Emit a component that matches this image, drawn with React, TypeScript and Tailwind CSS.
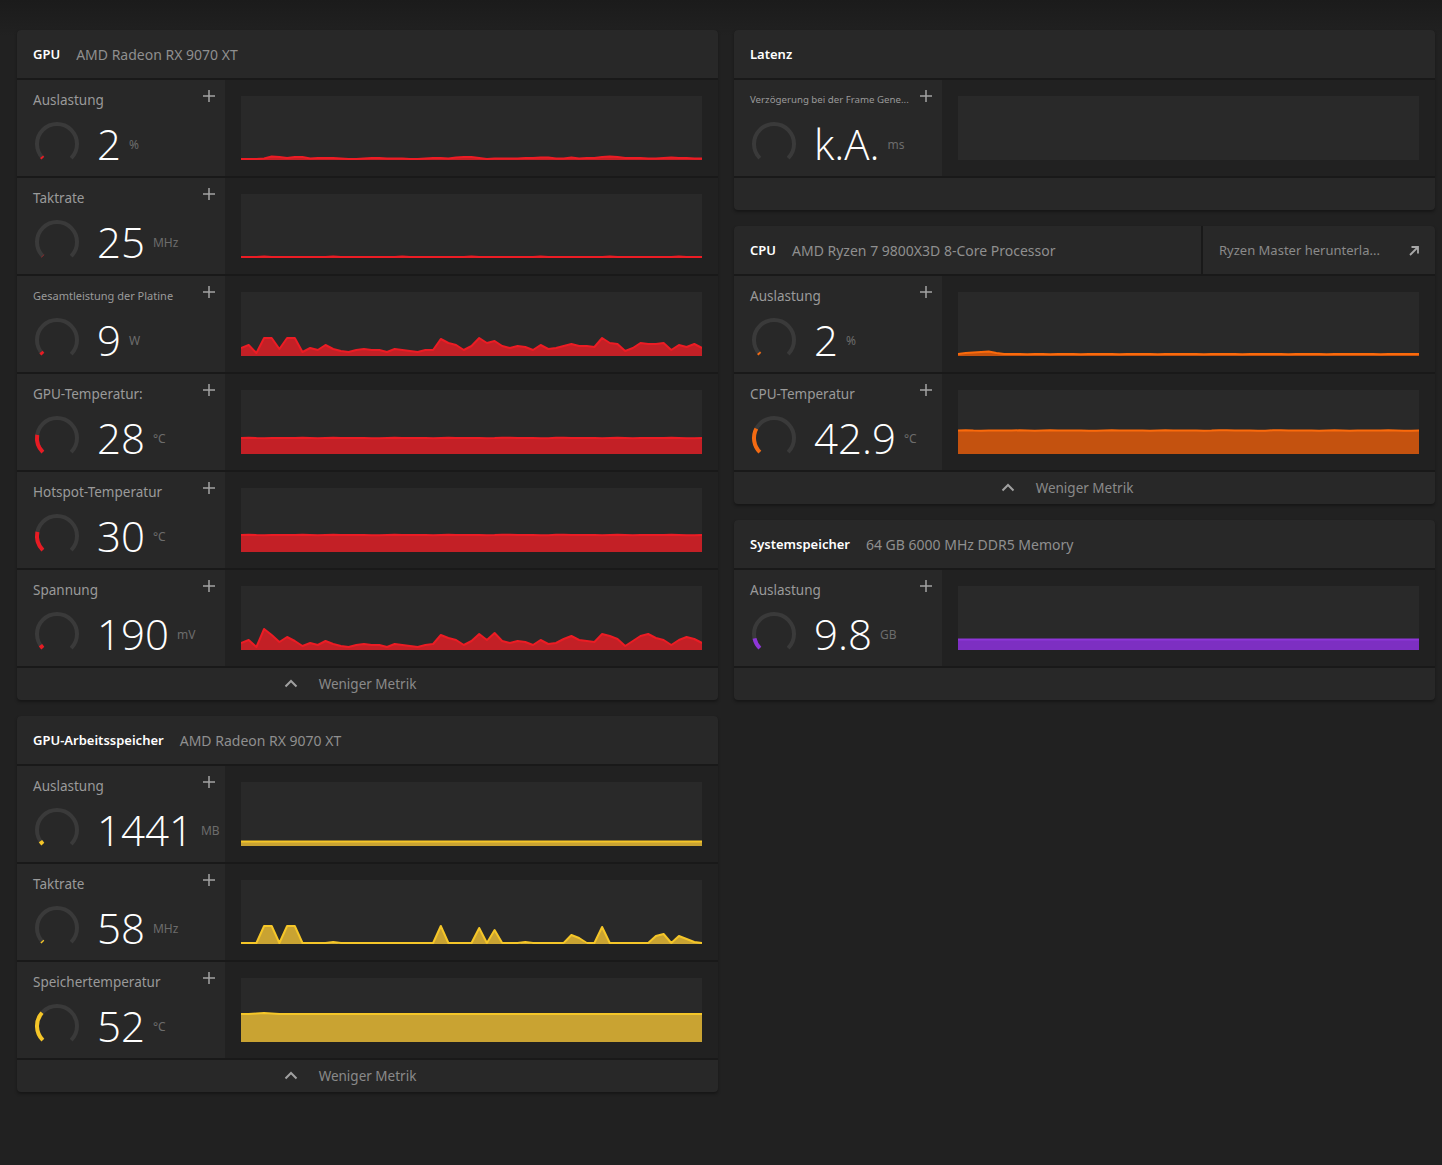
import React from "react";

type Palette = { stroke: string; fill: string; gauge: string };
const RED: Palette = { stroke: "#ec1c24", fill: "#c32026", gauge: "#e81b23" };
const YELLOW: Palette = { stroke: "#f5c628", fill: "#c9a332", gauge: "#f5c628" };
const ORANGE: Palette = { stroke: "#fb6a0b", fill: "#c4520f", gauge: "#f36a12" };
const PURPLE: Palette = { stroke: "#8e36d8", fill: "#7d2fc2", gauge: "#8e36d8" };

const flat = (base: number, n = 61, jitter = 0.3) =>
  Array.from({ length: n }, (_, i) => base + Math.sin(i * 1.7) * jitter * 0.6 + Math.cos(i * 0.9) * jitter * 0.4);

const POWER = [8, 11, 3, 18, 18, 7, 18, 18, 4, 8, 6, 11, 7, 5, 4, 6, 7, 6, 6, 4, 7, 6, 5, 4, 6, 6, 17, 13, 11, 6, 10, 18, 13, 15, 10, 8, 10, 9, 6, 11, 7, 8, 10, 12, 10, 10, 9, 18, 13, 12, 5, 8, 13, 12, 12, 13, 6, 11, 9, 12, 8];
const VOLT = [7, 10, 3, 21, 15, 8, 13, 9, 4, 7, 5, 9, 6, 4, 3, 5, 6, 5, 5, 3, 6, 5, 4, 3, 5, 6, 15, 12, 10, 5, 9, 16, 10, 17, 9, 7, 9, 8, 5, 10, 6, 7, 11, 14, 10, 9, 8, 16, 14, 11, 4, 9, 14, 16, 12, 10, 5, 10, 13, 11, 7];
const GPU_LOAD = [1, 1, 1, 1.5, 3.5, 3, 2, 3, 3, 1.5, 2, 2, 2, 1.5, 1, 1, 1.5, 2, 2, 1.5, 1.5, 1.5, 1, 1, 1.5, 2, 2, 1.5, 2.5, 3, 3, 2, 1, 1.5, 1.5, 1.5, 1.5, 2, 2, 2.5, 2.5, 1.5, 1.5, 2.5, 1.5, 2, 2, 3, 3.5, 3, 2, 2, 2, 1.5, 1.5, 2, 2.5, 2, 2, 1.5, 1.5];
const GPU_CLK = Array.from({ length: 61 }, (_, i) => (i % 9 === 3 ? 1.4 : 0.9));
const MEM_CLK = [0.5, 1, 0, 18, 18, 0, 18, 18, 0, 0, 0, 1, 2, 0, 0, 0.3, 0.5, 0.5, 0.5, 0, 0.5, 0.5, 0.3, 0, 0, 0.3, 18, 1, 0.5, 0.5, 0.5, 16, 0, 14, 0, 0, 0, 2, 0, 1, 0, 0, 0, 9, 6, 0, 0, 17, 1, 1, 0, 0, 1, 1, 8, 10, 0, 8, 5, 2, 1];
const CPU_LOAD = [2, 3, 3.5, 4, 4.5, 3, 2, 2, 2, 1.8, 2, 2, 1.8, 2, 2, 2, 1.8, 2, 2, 2, 2, 1.8, 2, 2, 2, 2, 1.8, 2, 2, 2, 2, 2, 1.8, 2, 2, 2, 2, 1.8, 2, 2, 2, 2, 2, 1.8, 2, 2, 2, 2, 1.8, 2, 2, 2, 2, 2, 2, 1.8, 2, 2, 2, 2, 2];
const MEM_TEMP = [28, 28, 28.5, 29, 28.5, 28, 28, 28, 28, 28, 28, 28, 28, 28, 28, 28, 28, 28, 28, 28, 28, 28, 28, 28, 28, 28, 28, 28, 28, 28, 28, 28, 28, 28, 28, 28, 28, 28, 28, 28, 28, 28, 28, 28, 28, 28, 28, 28, 28, 28, 28, 28, 28, 28, 28, 28, 28, 28, 28, 28, 28];

function Gauge({ frac, color }: { frac: number; color: string }) {
  const cx = 24, cy = 24, r = 20;
  const pt = (deg: number) => {
    const a = (deg * Math.PI) / 180;
    return [cx + r * Math.cos(a), cy + r * Math.sin(a)];
  };
  const [sx, sy] = pt(135);
  const [ex, ey] = pt(45);
  const bg = `M${sx} ${sy} A${r} ${r} 0 1 1 ${ex} ${ey}`;
  let fg: string | null = null;
  if (frac > 0) {
    const sweep = 270 * frac;
    const [fx, fy] = pt(135 + sweep);
    fg = `M${sx} ${sy} A${r} ${r} 0 ${sweep > 180 ? 1 : 0} 1 ${fx} ${fy}`;
  }
  return (
    <svg width="48" height="48" viewBox="0 0 48 48" className="shrink-0">
      <path d={bg} stroke="#3a3a3a" strokeWidth="4" fill="none" />
      {fg && <path d={fg} stroke={color} strokeWidth="4" fill="none" />}
    </svg>
  );
}

function Chart({ data, color }: { data?: number[]; color?: Palette }) {
  const W = 461, H = 64;
  if (!data || !color) return <div className="h-16 bg-[#292929]" />;
  const n = data.length;
  const pts = data.map((v, i) => [(i * W) / (n - 1), H - v]);
  const line = pts.map((p, i) => (i ? "L" : "M") + p[0].toFixed(1) + " " + Math.min(p[1], H - 1).toFixed(1)).join(" ");
  const area = `M0 ${H} ` + pts.map((p) => "L" + p[0].toFixed(1) + " " + p[1].toFixed(1)).join(" ") + ` L${W} ${H} Z`;
  return (
    <div className="h-16 bg-[#292929]">
      <svg className="block h-full w-full" viewBox={`0 0 ${W} ${H}`} preserveAspectRatio="none">
        <path d={area} fill={color.fill} />
        <path d={line} stroke={color.stroke} strokeWidth="2" fill="none" strokeLinejoin="round" />
      </svg>
    </div>
  );
}

function Plus() {
  return (
    <svg width="12" height="12" viewBox="0 0 12 12" className="shrink-0">
      <path d="M6 0V12M0 6H12" stroke="#a3a3a3" strokeWidth="1.5" />
    </svg>
  );
}

type RowProps = {
  label: string;
  labelClass?: string;
  value: string;
  unit: string;
  frac: number;
  color: Palette;
  data?: number[];
};

function Row({ label, labelClass = "text-[13.5px]", value, unit, frac, color, data }: RowProps) {
  return (
    <div className="flex h-[96px]">
      <div className="flex w-[208px] shrink-0 flex-col bg-[#282828] pl-4 pr-[10px] pt-[10px]">
        <div className="flex h-[20px] items-center justify-between">
          <span className={`min-w-0 whitespace-nowrap text-[#9a9a9a] ${labelClass}`}>{label}</span>
          <div className="-mt-[8px] ml-2 shrink-0">
            <Plus />
          </div>
        </div>
        <div className="mt-[10px] flex items-center">
          <Gauge frac={frac} color={color.gauge} />
          <span className="ml-[16px] font-['Open_Sans',sans-serif] text-[42px] font-light leading-none text-white">{value}</span>
          <span className="ml-[8px] mt-[1px] text-[12px] text-[#6c6c6c]">{unit}</span>
        </div>
      </div>
      <div className="flex-1 bg-[#212121] p-4">
        <Chart data={data} color={data ? color : undefined} />
      </div>
    </div>
  );
}

function ChevronUp() {
  return (
    <svg width="14" height="14" viewBox="0 0 14 14" className="shrink-0">
      <path d="M1.5 9.5L7 4L12.5 9.5" stroke="#a0a0a0" strokeWidth="2" fill="none" />
    </svg>
  );
}

function Footer({ less }: { less: boolean }) {
  return (
    <div className="flex h-8 items-center justify-center gap-[21px] bg-[#282828] text-[13.5px] text-[#8a8a8a]">
      {less && (
        <>
          <ChevronUp />
          <span>Weniger Metrik</span>
          <span className="w-[14px]" />
        </>
      )}
    </div>
  );
}

function Card({
  title,
  subtitle,
  extra,
  children,
  less = true,
}: {
  title: string;
  subtitle?: string;
  extra?: React.ReactNode;
  children: React.ReactNode;
  less?: boolean;
}) {
  return (
    <div className="flex flex-col gap-[2px] overflow-hidden rounded-[4px] bg-[#191919] shadow-[0_2px_3px_rgba(0,0,0,0.35)]">
      <div className="flex h-12 gap-[2px]">
        <div className="flex flex-1 items-center gap-4 bg-[#282828] px-4 pt-[1px]">
          <span className="text-[13px] font-semibold text-white">{title}</span>
          {subtitle && <span className="text-[14px] text-[#8f8f8f]">{subtitle}</span>}
        </div>
        {extra}
      </div>
      {children}
      <Footer less={less} />
    </div>
  );
}

function ArrowUpRight() {
  return (
    <svg width="12" height="12" viewBox="0 0 12 12" className="shrink-0">
      <path d="M2 10L10 2M3.5 2H10V8.5" stroke="#a8a8a8" strokeWidth="1.8" fill="none" />
    </svg>
  );
}

export default function App() {
  return (
    <div className="min-h-[1165px] w-full bg-[linear-gradient(to_bottom,#1b1b1b_0px,#212121_36px)] pl-[17px] pt-[30px] font-['Noto_Sans',sans-serif]">
      <div className="flex w-[1418px] items-start gap-4">
        <div className="flex w-[701px] flex-col gap-4">
          <Card title="GPU" subtitle="AMD Radeon RX 9070 XT">
            <Row label="Auslastung" value="2" unit="%" frac={0.02} color={RED} data={GPU_LOAD} />
            <Row label="Taktrate" value="25" unit="MHz" frac={0.004} color={RED} data={GPU_CLK} />
            <Row label="Gesamtleistung der Platine" labelClass="text-[11px]" value="9" unit="W" frac={0.03} color={RED} data={POWER} />
            <Row label="GPU-Temperatur:" value="28" unit="°C" frac={0.2} color={RED} data={flat(16)} />
            <Row label="Hotspot-Temperatur" value="30" unit="°C" frac={0.21} color={RED} data={flat(17)} />
            <Row label="Spannung" value="190" unit="mV" frac={0.04} color={RED} data={VOLT} />
          </Card>
          <Card title="GPU-Arbeitsspeicher" subtitle="AMD Radeon RX 9070 XT">
            <Row label="Auslastung" value="1441" unit="MB" frac={0.04} color={YELLOW} data={flat(4.5, 61, 0.15)} />
            <Row label="Taktrate" value="58" unit="MHz" frac={0.015} color={YELLOW} data={MEM_CLK} />
            <Row label="Speichertemperatur" value="52" unit="°C" frac={0.32} color={YELLOW} data={MEM_TEMP} />
          </Card>
        </div>
        <div className="flex w-[701px] flex-col gap-4">
          <Card title="Latenz" less={false}>
            <Row label="Verzögerung bei der Frame Gene..." labelClass="text-[9.7px]" value="k.A." unit="ms" frac={0} color={RED} />
          </Card>
          <Card
            title="CPU"
            subtitle="AMD Ryzen 7 9800X3D 8-Core Processor"
            extra={
              <div className="flex w-[232px] items-center justify-between bg-[#282828] pl-4 pr-[15px] pt-[1px] text-[13px] text-[#8a8a8a]">
                <span>Ryzen Master herunterla...</span>
                <ArrowUpRight />
              </div>
            }
          >
            <Row label="Auslastung" value="2" unit="%" frac={0.02} color={ORANGE} data={CPU_LOAD} />
            <Row label="CPU-Temperatur" value="42.9" unit="°C" frac={0.27} color={ORANGE} data={flat(23.5)} />
          </Card>
          <Card title="Systemspeicher" subtitle="64 GB 6000 MHz DDR5 Memory" less={false}>
            <Row label="Auslastung" value="9.8" unit="GB" frac={0.12} color={PURPLE} data={flat(10.5, 61, 0.1)} />
          </Card>
        </div>
      </div>
    </div>
  );
}
